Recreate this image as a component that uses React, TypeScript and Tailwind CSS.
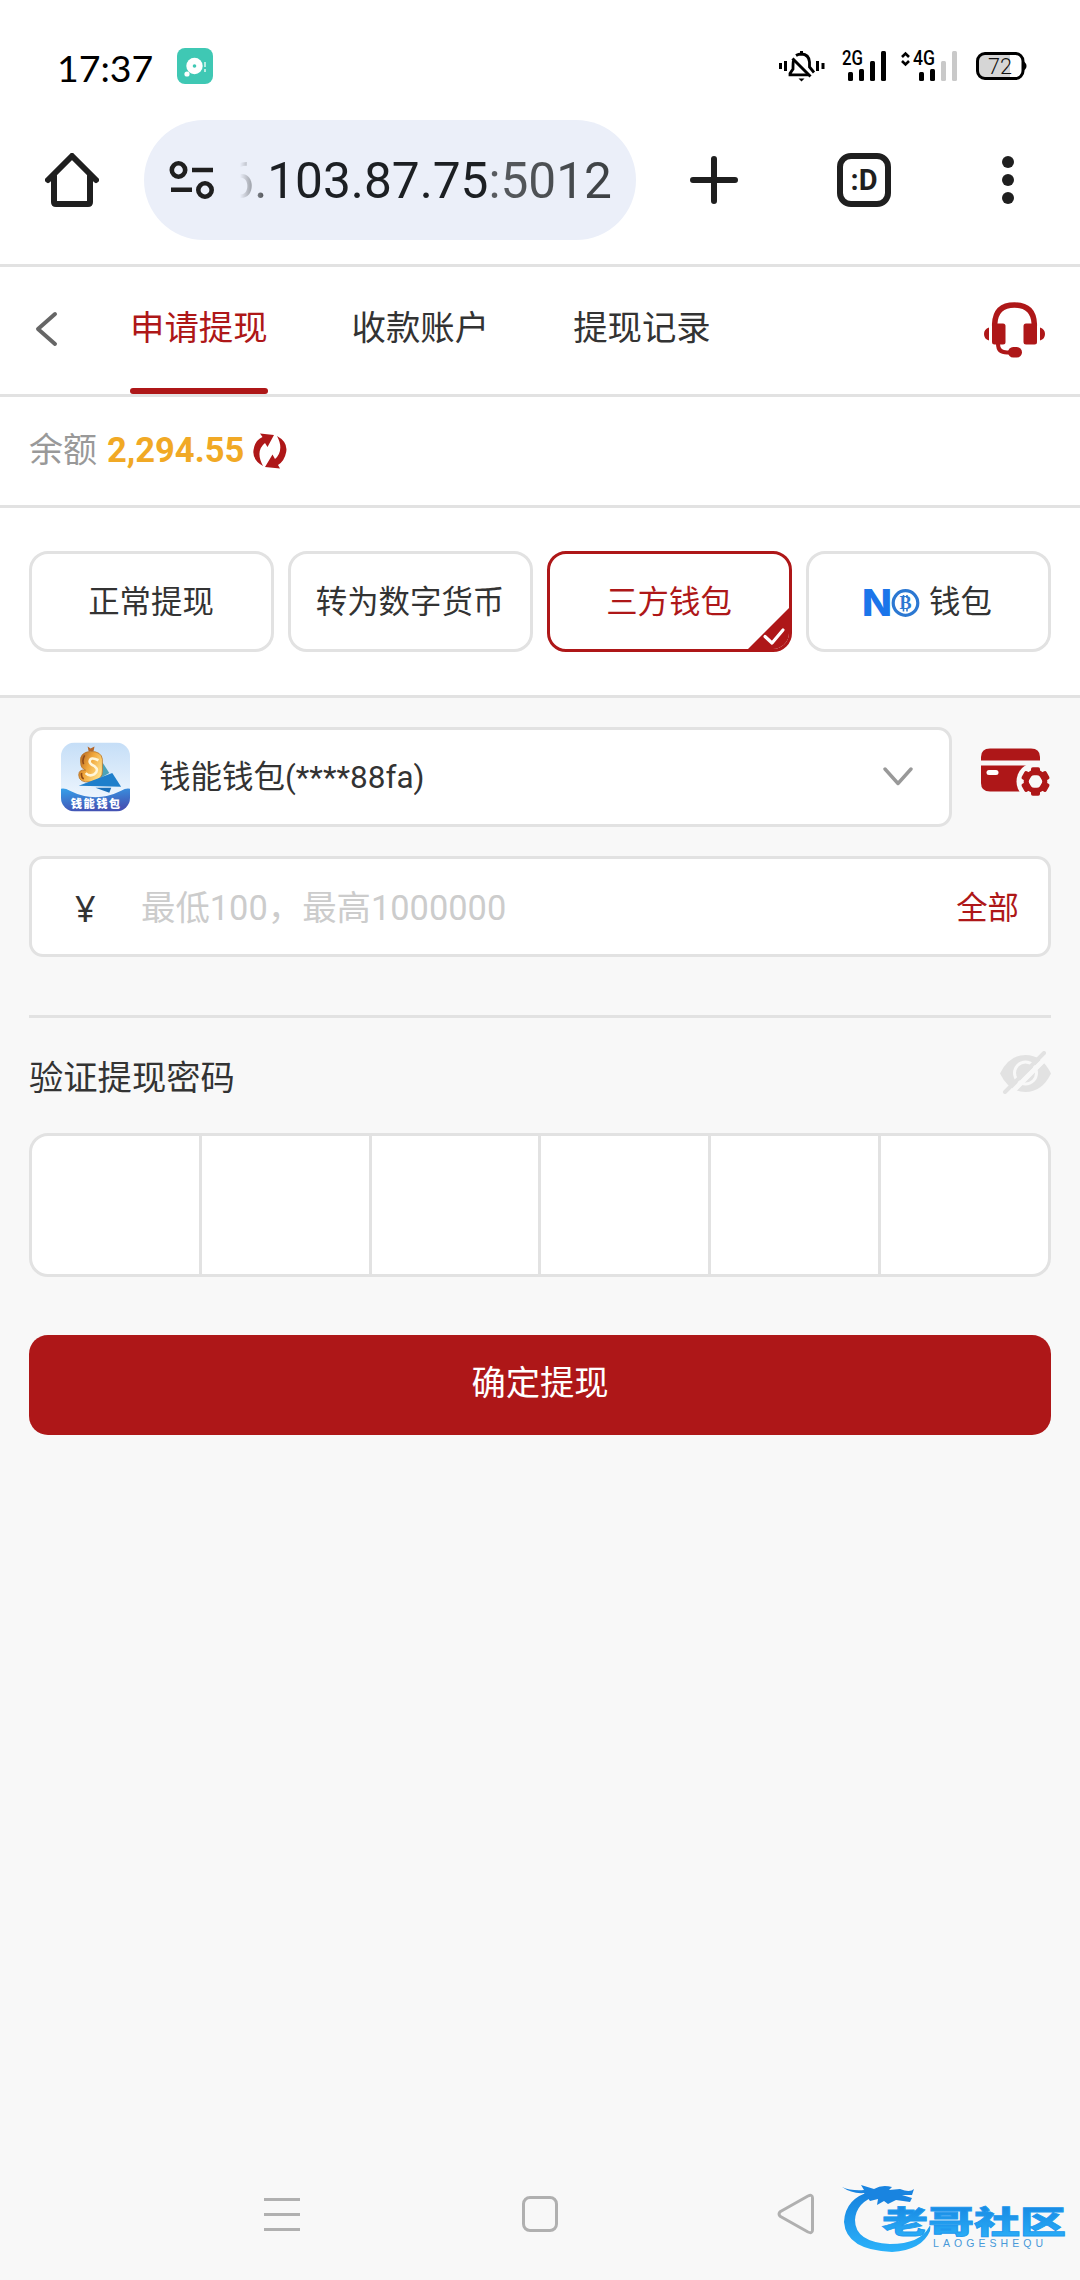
import type { ReactNode } from "react";

const tabs = ["申请提现", "收款账户", "提现记录"];

function StatusBar() {
  return (
    <div className="flex h-[120px] items-start justify-between pt-12 pr-[53px] pl-[57px]">
      <div className="flex items-start">
        <span className="w-[120px] font-[Lato,sans-serif] text-[37.500px] leading-[40px] text-black">17:37</span>
        <svg width="36" height="36" viewBox="0 0 36 36">
          <rect width="36" height="36" rx="8" fill="#3fc8b4" />
          <circle cx="17.5" cy="18" r="8.2" fill="#fff" />
          <circle cx="17.5" cy="18" r="1.8" fill="#3fc8b4" />
          <circle cx="10" cy="26" r="2.6" fill="#fff" />
          <path d="M28 14v5M28 21v3" stroke="#d8f5ee" strokeWidth="1.6" />
        </svg>
      </div>
      <div className="flex items-start">
        {/* muted bell with vibration marks */}
        <svg className="mt-[3px] mr-[17px]" width="46" height="31" viewBox="0 0 46 31" fill="none" stroke="#000">
          <path d="M1.500 12v6M6.500 10v10M38.500 10v10M44 12v6" strokeWidth="3" />
          <path d="M17 4.500Q19.500 3 22.500 3Q30 3.500 30.500 11V16L35 21.500M14.500 9.500Q14 11 14 18L11 22.500V23.800H29" strokeWidth="2.800" />
          <path d="M13.500 7.500L31.500 25.500" strokeWidth="3" />
          <path d="M22.500 0v3" strokeWidth="3" />
          <path d="M19.500 27.500h6l-3 3z" fill="#000" stroke="none" />
        </svg>
        <svg className="mt-[3px] mr-[14px] overflow-visible" width="45" height="31" viewBox="0 0 45 31">
          <text x="0" y="14" fontFamily="Roboto, sans-serif" fontWeight="500" fontSize="19.500" textLength="21" lengthAdjust="spacingAndGlyphs">
            2G
          </text>
          <rect x="6" y="21" width="5" height="9" rx="1.500" />
          <rect x="17" y="18" width="5" height="12" rx="1.500" />
          <rect x="28" y="10" width="5" height="20" rx="1.500" />
          <rect x="39" y="0" width="5" height="30" rx="1.500" />
        </svg>
        <svg className="mt-[3px] mr-[18px] overflow-visible" width="57" height="31" viewBox="0 0 57 31">
          <path d="M1 6L4.500 2.500L8 6M1 10L4.500 13.500L8 10" fill="none" stroke="#000" strokeWidth="2.600" />
          <text x="12" y="14" fontFamily="Roboto, sans-serif" fontWeight="500" fontSize="19.500" textLength="22" lengthAdjust="spacingAndGlyphs">
            4G
          </text>
          <rect x="18" y="21" width="5" height="9" rx="1.500" />
          <rect x="29" y="18" width="5" height="12" rx="1.500" />
          <rect x="40" y="10" width="5" height="20" rx="1.500" fill="#c9c9c9" />
          <rect x="51" y="0" width="5" height="30" rx="1.500" fill="#c9c9c9" />
        </svg>
        <svg className="mt-1" width="51" height="28" viewBox="0 0 51 28">
          <path d="M8 3H34V25H8Q3 25 3 20V8Q3 3 8 3Z" fill="#d6d6d6" />
          <rect x="1.500" y="1.500" width="45.500" height="25" rx="7.500" fill="none" stroke="#000" strokeWidth="3" />
          <path d="M47 9Q50.500 11 50.500 14T47 19Z" />
          <text x="12" y="21.500" fontFamily="Roboto, sans-serif" fontWeight="300" fontSize="22" fill="#111" textLength="24" lengthAdjust="spacingAndGlyphs">
            72
          </text>
        </svg>
      </div>
    </div>
  );
}

function BrowserBar() {
  return (
    <div className="flex h-[147px] items-start border-b-[3px] border-[#e2e2e2]">
      <div className="flex h-[120px] w-full items-center">
        <svg className="ml-[45px]" width="54" height="54" viewBox="0 0 54 54" fill="none" stroke="#1f1f1f" strokeWidth="6" strokeLinejoin="round" strokeLinecap="round">
          <path d="M3 27L27 3L51 27" />
          <path d="M9 23V49Q9 51 11 51H43Q45 51 45 49V23" />
        </svg>
        <div className="ml-[45px] flex h-[120px] w-[492px] items-center rounded-full bg-[#ebeff9]">
          <svg className="ml-[25px]" width="47" height="40" viewBox="0 0 47 40" fill="none" stroke="#1f1f1f" strokeWidth="4.600">
            <circle cx="9.500" cy="10" r="6.700" />
            <path d="M23 10H44M2 29.700H23" />
            <circle cx="36" cy="30" r="6.700" />
          </svg>
          <div className="ml-[24px] flex w-[372px] justify-end overflow-hidden pt-[2px] font-[Roboto,sans-serif] text-[49.600px] leading-[60px] whitespace-nowrap [mask-image:linear-gradient(90deg,transparent,#000_32px)]">
            <span className="text-[#1c1f23]">6.103.87.75</span>
            <span className="bg-linear-to-r from-[#5a5d62] to-[#3c4043] bg-clip-text text-transparent">:5012</span>
          </div>
        </div>
        <svg className="ml-[54px]" width="48" height="48" viewBox="0 0 48 48" stroke="#1f1f1f" strokeWidth="6" strokeLinecap="round">
          <path d="M24 3V45M3 24H45" />
        </svg>
        <div className="ml-[99px] flex size-[54px] items-center justify-center rounded-[14px] border-[6px] border-[#1f1f1f] font-[Roboto,sans-serif] text-[29px] leading-none font-bold text-[#1f1f1f]">
          :D
        </div>
        <div className="ml-[111px] flex flex-col gap-[6px]">
          <i className="size-3 rounded-full bg-[#1f1f1f]" />
          <i className="size-3 rounded-full bg-[#1f1f1f]" />
          <i className="size-3 rounded-full bg-[#1f1f1f]" />
        </div>
      </div>
    </div>
  );
}

function HeadsetIcon() {
  return (
    <svg width="61" height="56" viewBox="0 0 61 56" fill="#ae1718">
      <path d="M10.700 24V22Q11.500 3 30.500 3T50.300 22V24" fill="none" stroke="#ae1718" strokeWidth="5.500" />
      <rect x="8" y="21.500" width="13.500" height="21" rx="2.500" />
      <rect x="39.500" y="21.500" width="13.500" height="21" rx="2.500" />
      <path d="M5 25.500V38.500Q0 37 0 32T5 25.500ZM56 25.500V38.500Q61 37 61 32T56 25.500Z" />
      <path d="M14 42Q14 50.500 23 50.500H28" fill="none" stroke="#ae1718" strokeWidth="4" />
      <rect x="24" y="45" width="14" height="10.500" rx="5.200" />
    </svg>
  );
}

function Header() {
  return (
    <div className="flex h-[130px] items-stretch border-b-[3px] border-[#e2e2e2] bg-white">
      <svg className="mt-[44px] ml-[35px]" width="24" height="36" viewBox="0 0 24 36" fill="none" stroke="#666" strokeWidth="4" strokeLinecap="round" strokeLinejoin="round">
        <path d="M20 3L3 18L20 33" />
      </svg>
      <div className="ml-[71px] flex gap-[84px]">
        {tabs.map((t, i) => (
          <div key={t} className={`flex flex-col justify-between ${i === 0 ? "text-[#ae1718]" : "text-[#333]"}`}>
            <span className="pt-[39px] text-[34.400px] leading-[44px]">{t}</span>
            {i === 0 && <span className="h-[6px] rounded-full bg-[#ae1718]" />}
          </div>
        ))}
      </div>
      <div className="mt-[35px] mr-[35px] ml-auto">
        <HeadsetIcon />
      </div>
    </div>
  );
}

function Balance() {
  return (
    <div className="flex h-[111px] items-center border-b-[3px] border-[#e2e2e2] bg-white pb-[3px] pl-[29px]">
      <span className="text-[34px] leading-[50px] text-[#999]">余额</span>
      <span className="ml-[10px] text-[34.500px] leading-[50px] font-bold text-[#f1a925]">2,294.55</span>
      <svg className="mt-[2px] ml-[9px]" width="34" height="36" viewBox="0 0 34 36" fill="#ae1718">
        <path d="M7 0.500L21 2L14.500 14L12 10Q2 18 10 33Q-1 27 0.500 17Q2 7 9.500 4Z" />
        <path d="M27 35.500L12 34L19.500 21.500L22 26Q31.500 17 24 3Q35 9 33.200 19Q31.500 28 25 32Z" />
      </svg>
    </div>
  );
}

function Method({ active, children }: { active?: boolean; children: ReactNode }) {
  return (
    <button
      className={`relative flex h-[101px] flex-1 items-center justify-center overflow-hidden rounded-[19px] border-[3px] bg-white pt-[2px] pr-px text-[31.400px] ${
        active ? "border-[#ae1718] text-[#ae1718]" : "border-[#e2e2e2] text-[#333]"
      }`}
    >
      {children}
      {active && (
        <svg className="absolute right-[-1px] bottom-[-1px]" width="43" height="43" viewBox="0 0 43 43">
          <path d="M43 0V43H0Z" fill="#ae1718" />
          <path d="M18 29.500L25 36L36 23" fill="none" stroke="#fff" strokeWidth="3.200" strokeLinecap="round" strokeLinejoin="round" />
        </svg>
      )}
    </button>
  );
}

function NoLogo() {
  return (
    <svg className="mr-[9px] overflow-visible" width="56" height="28" viewBox="0 0 56 28">
      <text x="-2" y="27" fontFamily="Inter, sans-serif" fontWeight="800" fontSize="37" fill="#1b75ea" textLength="30" lengthAdjust="spacingAndGlyphs">
        N
      </text>
      <circle cx="41.500" cy="14" r="12.300" fill="#fff" stroke="#2b78d2" strokeWidth="3.200" />
      <text x="41.500" y="20" textAnchor="middle" fontFamily="Liberation Serif, serif" fontWeight="700" fontSize="18" fill="#2b78d2">
        B
      </text>
      <path d="M39.500 6V9M43 6V9M39.500 19.500V22.500M43 19.500V22.500" stroke="#2b78d2" strokeWidth="1.600" />
    </svg>
  );
}

function WalletLogo() {
  return (
    <svg width="69" height="70" viewBox="0 0 70 70">
      <defs>
        <linearGradient id="sky" x1="0" y1="0" x2="0" y2="1">
          <stop offset="0" stopColor="#c5def7" />
          <stop offset="1" stopColor="#f7fbff" />
        </linearGradient>
        <linearGradient id="sea" x1="0" y1="0" x2="0.300" y2="1">
          <stop offset="0" stopColor="#35a0ea" />
          <stop offset="1" stopColor="#4453b4" />
        </linearGradient>
        <linearGradient id="gold" x1="0" y1="0" x2="1" y2="0.600">
          <stop offset="0" stopColor="#a8591c" />
          <stop offset="0.500" stopColor="#f0a63a" />
          <stop offset="1" stopColor="#ffe08a" />
        </linearGradient>
        <clipPath id="tile">
          <rect width="70" height="70" rx="14" />
        </clipPath>
      </defs>
      <g clipPath="url(#tile)">
        <rect width="70" height="70" fill="url(#sky)" />
        <path d="M42 20L49 31L40 36Z" fill="#4ba3b8" />
        <path d="M27 4L30 6L34 4L33 9H28Z" fill="#b5672a" />
        <path d="M20 21Q18 10 30 9Q41 9 42 17V28Q43 38 30 40Q18 41 18 33Q18 27 25 28Q20 26 20 21Z" fill="url(#gold)" stroke="#b8742a" strokeWidth="0.800" />
        <path d="M38 18Q30 14 29 19Q29 22 34 24Q39 28 34 32Q29 35 25 31" fill="none" stroke="#fff6da" strokeWidth="2.600" />
        <path d="M24 13Q21 18 23 22M21 31Q20 35 23 37" fill="none" stroke="#8f4a17" strokeWidth="1.600" />
        <path d="M18 44L52 31L61 45Z" fill="#1f7fcb" />
        <path d="M35 46H51L49 51Z" fill="#1b6fb8" />
        <path d="M0 47Q4 46 9 49Q35 62 61 49Q66 46 70 47V70H0Z" fill="url(#sea)" />
      </g>
      <text x="35" y="66" textAnchor="middle" fontFamily="Noto Sans CJK SC, sans-serif" fontWeight="900" fontSize="11.500" fill="#fff" textLength="50">
        钱能钱包
      </text>
    </svg>
  );
}

const gearTeeth = [0, 60, 120, 180, 240, 300];

function CardGearIcon() {
  return (
    <svg width="70" height="50" viewBox="0 0 70 50">
      <path d="M0 17.500H59V43.500H9Q0 43.500 0 35Z" fill="#ae1718" />
      <rect x="5.500" y="22" width="12" height="5" rx="2.500" fill="#fff" />
      <circle cx="54.500" cy="33.500" r="19" fill="#f8f8f8" />
      <g transform="translate(54.500 33.500)" fill="#ae1718">
        {gearTeeth.map((a) => (
          <rect key={a} x="-4.500" y="-14.300" width="9" height="8" rx="1.800" transform={`rotate(${a})`} />
        ))}
        <circle r="9.300" fill="none" stroke="#ae1718" strokeWidth="5" />
      </g>
      <path d="M0 12.500V9Q0 0.500 9 0.500H50Q59 0.500 59 9V12.500Z" fill="#ae1718" />
    </svg>
  );
}

function EyeOffIcon() {
  return (
    <svg width="51" height="43" viewBox="0 0 51 43" fill="none">
      <path d="M0 22.500Q9 4 25.500 4T51 22.500Q42 41 25.500 41T0 22.500Z" fill="#e2e2e2" />
      <circle cx="25.500" cy="22" r="11" stroke="#f8f8f8" strokeWidth="3" />
      <path d="M8 45L50 3" stroke="#f8f8f8" strokeWidth="5" />
      <path d="M5 41L44 2" stroke="#e2e2e2" strokeWidth="4" strokeLinecap="round" />
    </svg>
  );
}

function SystemNav() {
  return (
    <div className="mt-auto flex h-[132px] items-center pl-[264px]">
      <div className="flex w-9 flex-col gap-3">
        <i className="h-[3px] bg-[#b0b0b0]" />
        <i className="h-[3px] bg-[#b0b0b0]" />
        <i className="h-[3px] bg-[#b0b0b0]" />
      </div>
      <i className="ml-[222px] size-9 rounded-lg border-[3px] border-[#b0b0b0]" />
      <svg className="ml-[219px]" width="38" height="42" viewBox="0 0 38 42" fill="none" stroke="#b0b0b0" strokeWidth="3" strokeLinejoin="round">
        <path d="M31 3L3.500 18.500Q0.500 21 3.500 23.500L31 39Q35.500 41 35.500 37V5Q35.500 1 31 3Z" />
      </svg>
    </div>
  );
}

function Watermark() {
  return (
    <svg className="absolute right-[14px] bottom-[22px]" width="224" height="74" viewBox="0 0 224 74">
      <defs>
        <linearGradient id="wm" x1="0" y1="0" x2="0" y2="1">
          <stop offset="0" stopColor="#1580dd" />
          <stop offset="1" stopColor="#2bb2fa" />
        </linearGradient>
      </defs>
      <path d="M36 11Q14 18 13 36Q13 58 48 60Q78 60 87 43Q89 39 88 47Q80 66 50 68Q4 66 2 38Q3 14 30 7Z" fill="url(#wm)" />
      <path d="M0 3Q9 7 22 6L19 1L32 5Q40 0 50 3L47 6L58 5Q68 9 72 5L70 11L60 11L70 14L68 18L54 16L46 20L42 17L35 21L36 15L28 17L22 9Q10 10 0 3Z" fill="#1984e0" />
      <text x="40" y="49" fontFamily="Noto Sans CJK SC, sans-serif" fontWeight="900" fontSize="31" fill="url(#wm)" stroke="#2098ee" strokeWidth="0.800" textLength="184" lengthAdjust="spacingAndGlyphs">
        老哥社区
      </text>
      <text x="91" y="63" fontFamily="Liberation Sans, sans-serif" fontSize="10.500" fill="#4799d8" textLength="110">
        LAOGESHEQU
      </text>
    </svg>
  );
}

export default function App() {
  return (
    <div
      lang="zh-CN"
      className="relative flex h-[2280px] w-[1080px] flex-col bg-[#f8f8f8] font-[Roboto,'Noto_Sans_CJK_SC',sans-serif]"
    >
      <div className="bg-white">
        <StatusBar />
        <BrowserBar />
      </div>
      <Header />
      <Balance />

      <div className="flex h-[190px] gap-[14px] border-b-[3px] border-[#e2e2e2] bg-white px-[29px] pt-[43px]">
        <Method>正常提现</Method>
        <Method>转为数字货币</Method>
        <Method active>三方钱包</Method>
        <Method>
          <NoLogo />
          钱包
        </Method>
      </div>

      <div className="flex flex-col px-[29px] pt-[29px]">
        <div className="flex">
          <div className="flex h-[100px] w-[925px] items-center rounded-[14px] border-[3px] border-[#e2e2e2] bg-white pr-[36px] pl-[29px]">
            <WalletLogo />
            <span className="ml-[29px] pt-px text-[31.500px] text-[#333]">钱能钱包(****88fa)</span>
            <svg className="ml-auto" width="32" height="20" viewBox="0 0 32 20" fill="none" stroke="#999" strokeWidth="3.400" strokeLinecap="round" strokeLinejoin="round">
              <path d="M4 2L17 16.500L30 2" />
            </svg>
          </div>
          <div className="mt-[21px] ml-[29px]">
            <CardGearIcon />
          </div>
        </div>

        <div className="mt-[29px] flex h-[101px] items-center rounded-[14px] border-[3px] border-[#e2e2e2] bg-white pt-[4px] pr-[29px] pl-[43px]">
          <span className="w-[66px] font-['Noto_Sans',sans-serif] text-[36px] leading-[50px] text-[#333]">¥</span>
          <span className="text-[34.400px] text-[#ccc]">最低100，最高1000000</span>
          <span className="ml-auto text-[31.400px] text-[#ae1718]">全部</span>
        </div>

        <div className="mt-[58px] h-[3px] bg-[#e2e2e2]" />

        <div className="mt-[33px] flex h-[82px] items-start justify-between">
          <span className="mt-[3px] text-[34.300px] leading-[48px] text-[#333]">验证提现密码</span>
          <EyeOffIcon />
        </div>

        <div className="flex h-[144px] divide-x-[3px] divide-[#e2e2e2] overflow-hidden rounded-[19px] border-[3px] border-[#e2e2e2] bg-white">
          {[0, 1, 2, 3, 4].map((n) => (
            <div key={n} className="w-[169.800px]" />
          ))}
          <div className="flex-1" />
        </div>

        <button className="mt-[58px] h-[100px] rounded-[19px] bg-[#ae1718] pb-[2px] text-[34.300px] text-white">
          确定提现
        </button>
      </div>

      <SystemNav />
      <Watermark />
    </div>
  );
}
